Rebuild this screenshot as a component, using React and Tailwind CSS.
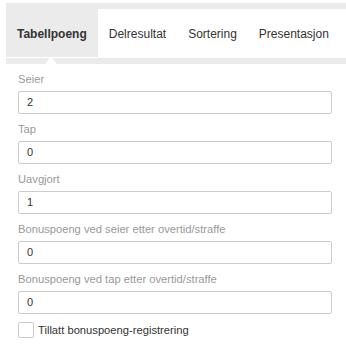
const TABS = ['Tabellpoeng', 'Delresultat', 'Sortering', 'Presentasjon'];

const FIELDS = [
  { label: 'Seier', value: '2' },
  { label: 'Tap', value: '0' },
  { label: 'Uavgjort', value: '1' },
  { label: 'Bonuspoeng ved seier etter overtid/straffe', value: '0' },
  { label: 'Bonuspoeng ved tap etter overtid/straffe', value: '0' },
];

export default function App() {
  return (
    <div className="w-[346px] h-[350px] bg-white pt-[3px] pl-[6px] font-['Liberation_Sans',Arial,sans-serif] overflow-hidden">
      {/* Tab strip */}
      <div className="h-[6px] bg-[#ebebeb]" />
      <div className="flex h-[48px] items-stretch">
        {TABS.map((t, i) => (
          <div
            key={t}
            className={`flex items-center px-[11px] pt-[1px] text-[12px] text-[#333] ${i === 0 ? 'bg-[#ebebeb] font-bold' : ''}`}
          >
            {t}
          </div>
        ))}
      </div>
      <div className="relative h-[7px] border-t border-white bg-[#ebebeb]">
        <div className="absolute left-[39px] bottom-0 w-0 h-0 border-l-[6px] border-r-[6px] border-b-[7px] border-l-transparent border-r-transparent border-b-white" />
      </div>

      {/* Form */}
      <div className="pl-[12px] pr-[14px]">
        {FIELDS.map((f) => (
          <div key={f.label} className="pt-[8px]">
            <div className="h-[15px] leading-[15px] text-[11.2px] text-[#999] mb-[4px]">{f.label}</div>
            <div className="h-[23px] border border-[#cccccc] rounded-[2px] flex items-center pl-[8px] text-[11px] text-[#333]">
              {f.value}
            </div>
          </div>
        ))}
        <label className="flex items-center gap-[4px] mt-[8px]">
          <span className="w-[16px] h-[16px] border border-[#cccccc] rounded-[2px] bg-white" />
          <span className="text-[11.2px] text-[#333]">Tillatt bonuspoeng-registrering</span>
        </label>
      </div>
    </div>
  );
}
